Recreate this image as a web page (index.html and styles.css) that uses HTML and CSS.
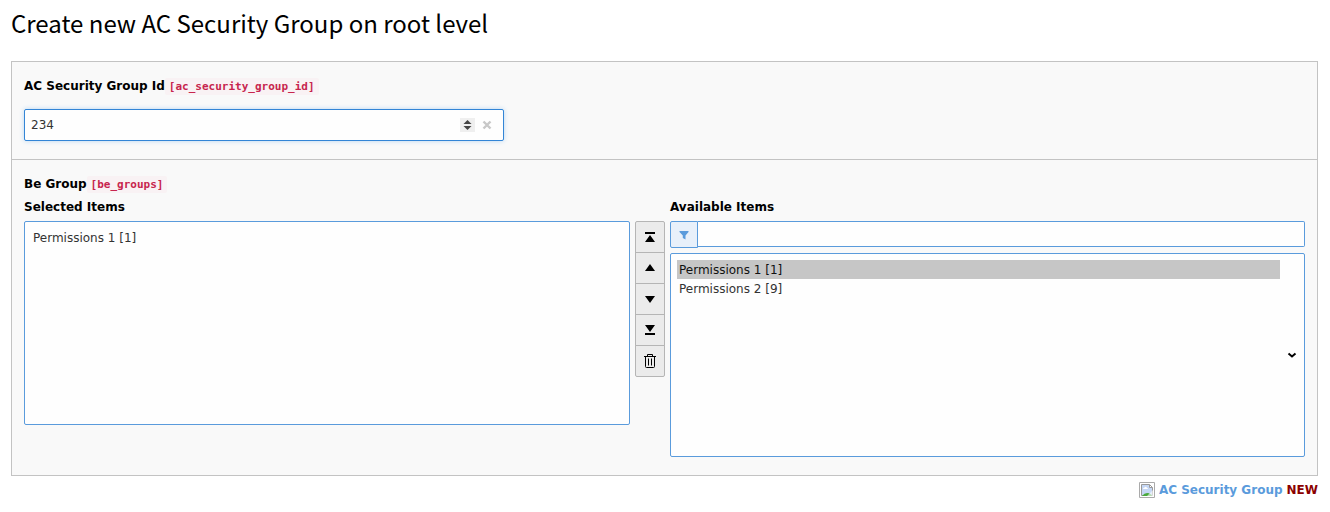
FILE: index.html
```html
<!DOCTYPE html>
<html lang="en">
<head>
<meta charset="utf-8">
<title>Create new AC Security Group</title>
<link rel="stylesheet" href="styles.css">
</head>
<body>
<h1 class="title">Create new AC Security Group on root level</h1>
<form class="panel">
  <section class="section">
    <div class="heading"><label for="group-id">AC Security Group Id</label> <code class="code">[ac_security_group_id]</code></div>
    <div class="number">
      <input class="number-input" id="group-id" type="number" value="234">
      <button class="spin" type="button" aria-label="Change value">
        <svg width="15" height="14" viewBox="0 0 15 14"><path d="M3.500 6 7.500 2 11.500 6zM3.500 8 7.500 12 11.500 8z" fill="#444"/></svg>
      </button>
      <button class="clear" type="button" aria-label="Clear">
        <svg width="10" height="10" viewBox="0 0 10 10"><path d="M1.500 1.500 8.500 8.500M8.500 1.500 1.500 8.500" stroke="#c8c8c8" stroke-width="2.400"/></svg>
      </button>
    </div>
  </section>
  <section class="section section-groups">
    <div class="heading">Be Group <code class="code">[be_groups]</code></div>
    <div class="picker">
      <div class="selected">
        <label class="caption" for="selected">Selected Items</label>
        <select class="list" id="selected" multiple size="10">
          <option>Permissions 1 [1]</option>
        </select>
      </div>
      <div class="tools">
        <button class="tool" type="button" aria-label="Move to top"><svg width="16" height="16" viewBox="0 0 16 16"><path d="M3 3h10v2H3zM8 6l5 7H3z"/></svg></button>
        <button class="tool" type="button" aria-label="Move up"><svg width="16" height="16" viewBox="0 0 16 16"><path d="M8 4l5 7H3z"/></svg></button>
        <button class="tool" type="button" aria-label="Move down"><svg width="16" height="16" viewBox="0 0 16 16"><path d="M3 5h10l-5 7z"/></svg></button>
        <button class="tool" type="button" aria-label="Move to bottom"><svg width="16" height="16" viewBox="0 0 16 16"><path d="M3 3h10l-5 7zM3 11h10v2H3z"/></svg></button>
        <button class="tool" type="button" aria-label="Remove"><svg width="16" height="16" viewBox="0 0 16 16"><path d="M2 3.500h12M5.500 3.500v-2h5v2M3.500 3.500v10q0 1 1 1h7q1 0 1-1v-10M6.500 5.500v7M9.500 5.500v7" fill="none" stroke="#000"/></svg></button>
      </div>
      <div class="available">
        <label class="caption" for="available">Available Items</label>
        <div class="filter">
          <label class="filter-icon" for="filter" aria-label="Filter"><svg width="10" height="10" viewBox="0 0 10 10"><path d="M.5 1h9v1L6.500 5.500V9.500L3.800 8V5.500L.5 2z" fill="#5a9bdc"/></svg></label>
          <input class="filter-input" id="filter" type="text">
        </div>
        <div class="list-wrap">
          <select class="list list-available" id="available" multiple size="10">
            <option selected>Permissions 1 [1]</option>
            <option>Permissions 2 [9]</option>
          </select>
          <svg class="chevron" width="10" height="8" viewBox="0 0 10 8"><path d="M1.500 2.500 5 5.500 8.500 2.500" fill="none" stroke="#000" stroke-width="2"/></svg>
        </div>
      </div>
    </div>
  </section>
</form>
<footer class="footer">
  <svg width="16" height="16" viewBox="0 0 16 16"><path d="M.5.5h15v15H.5z" fill="#fff" stroke="#aaa"/><path d="M2.500 2.500h8l3 3v8h-11z" fill="#c5d7f5" stroke="#999"/><path d="M10.500 2v3.500H14V2z" fill="#fff"/><path d="M10.500 2.500v3h3z" fill="#fff" stroke="#999"/><path d="M4 7q0-1.500 1.500-1.500Q7 4 8 6q1 0 1 1z" fill="#fff"/><path d="M3 14q4-5 9-1.500l1 1.500z" fill="#4aa93c"/><path d="M14 8 8 14h6z" fill="#fff" opacity=".6"/></svg>
  <span class="record">AC Security Group</span>
  <span class="new">NEW</span>
</footer>
</body>
</html>
```
FILE: styles.css
```css
* { box-sizing: border-box; }
body {
  margin: 0;
  padding: 4px 12px 0 11px;
  background: #fff;
  color: #000;
  font: 12px/18px "DejaVu Sans", Verdana, sans-serif;
}
.title {
  margin: 0 0 19px;
  font: 400 24px/38px "Noto Sans CJK SC", "Source Sans Pro", sans-serif;
}
.panel { border: 1px solid #c3c3c3; background: #f9f9f9; }
.section { padding: 15px 12px 18px; }
.section-groups { border-top: 1px solid #c3c3c3; }
.heading, .caption { font-weight: 700; }
.heading { display: flex; align-items: center; }
.caption { display: block; margin-bottom: 5px; }
.code {
  padding: 0 4px;
  border-radius: 2px;
  background: #f9f2f4;
  color: #c7254e;
  font: 700 11px/17px "DejaVu Sans Mono", monospace;
}
.number {
  display: flex;
  align-items: center;
  width: 100%;
  max-width: 480px;
  height: 32px;
  margin-top: 14px;
  padding-right: 11px;
  border: 1px solid #3385d6;
  border-radius: 2px;
  background: #fefefe;
  box-shadow: 0 0 5px #b9d8f4;
}
.number-input {
  flex: 1;
  min-width: 0;
  padding: 0 6px;
  border: 0;
  outline: 0;
  background: transparent;
  color: #333;
  font: inherit;
  appearance: textfield;
}
.number-input::-webkit-inner-spin-button { appearance: none; margin: 0; }
.spin, .clear { display: flex; padding: 0; border: 0; background: none; }
.spin { margin-right: 7px; background: #efefef; }
.picker { display: flex; gap: 5px; margin-top: 5px; }
.selected { flex: 606 1 0; min-width: 0; }
.available { flex: 635 1 0; min-width: 0; }
.list {
  display: block;
  width: 100%;
  height: 204px;
  padding: 6px;
  border: 1px solid #5a9bdc;
  border-radius: 2px;
  outline: 0;
  background: #fefefe;
  color: #333;
  font: inherit;
  overflow: hidden;
}
.list option { height: 19px; min-height: 19px; padding: 3px 2px 0; }
.list option:checked { background: #c6c6c6 linear-gradient(#c6c6c6, #c6c6c6); color: #111; }
.list-available { padding-right: 24px; }
.tools { display: flex; flex-direction: column; align-self: flex-start; width: 30px; margin-top: 23px; }
.tool {
  display: flex;
  align-items: center;
  justify-content: center;
  height: 32px;
  padding: 0;
  border: 1px solid #b5b5b5;
  background: #ebebeb;
}
.tool + .tool { margin-top: -1px; }
.tool:first-child { border-radius: 2px 2px 0 0; }
.tool:last-child { border-radius: 0 0 2px 2px; }
.filter { display: flex; align-items: flex-start; height: 27px; margin-bottom: 5px; }
.filter-icon {
  display: flex;
  align-items: center;
  justify-content: center;
  width: 28px;
  height: 27px;
  border: 1px solid #5a9bdc;
  border-radius: 2px 0 0 2px;
  background: #e8f0fa;
}
.filter-input {
  flex: 1;
  min-width: 0;
  height: 26px;
  padding: 0 6px;
  border: 1px solid #5a9bdc;
  border-left: 0;
  border-radius: 0 2px 2px 0;
  background: #fefefe;
  font: inherit;
}
.list-wrap { position: relative; }
.chevron { position: absolute; right: 8px; top: 98px; }
.footer {
  display: flex;
  align-items: center;
  justify-content: flex-end;
  gap: 4px;
  margin-top: 5px;
  font-weight: 700;
}
.record { color: #5a9bdc; }
.new { color: #8b0000; }
```
